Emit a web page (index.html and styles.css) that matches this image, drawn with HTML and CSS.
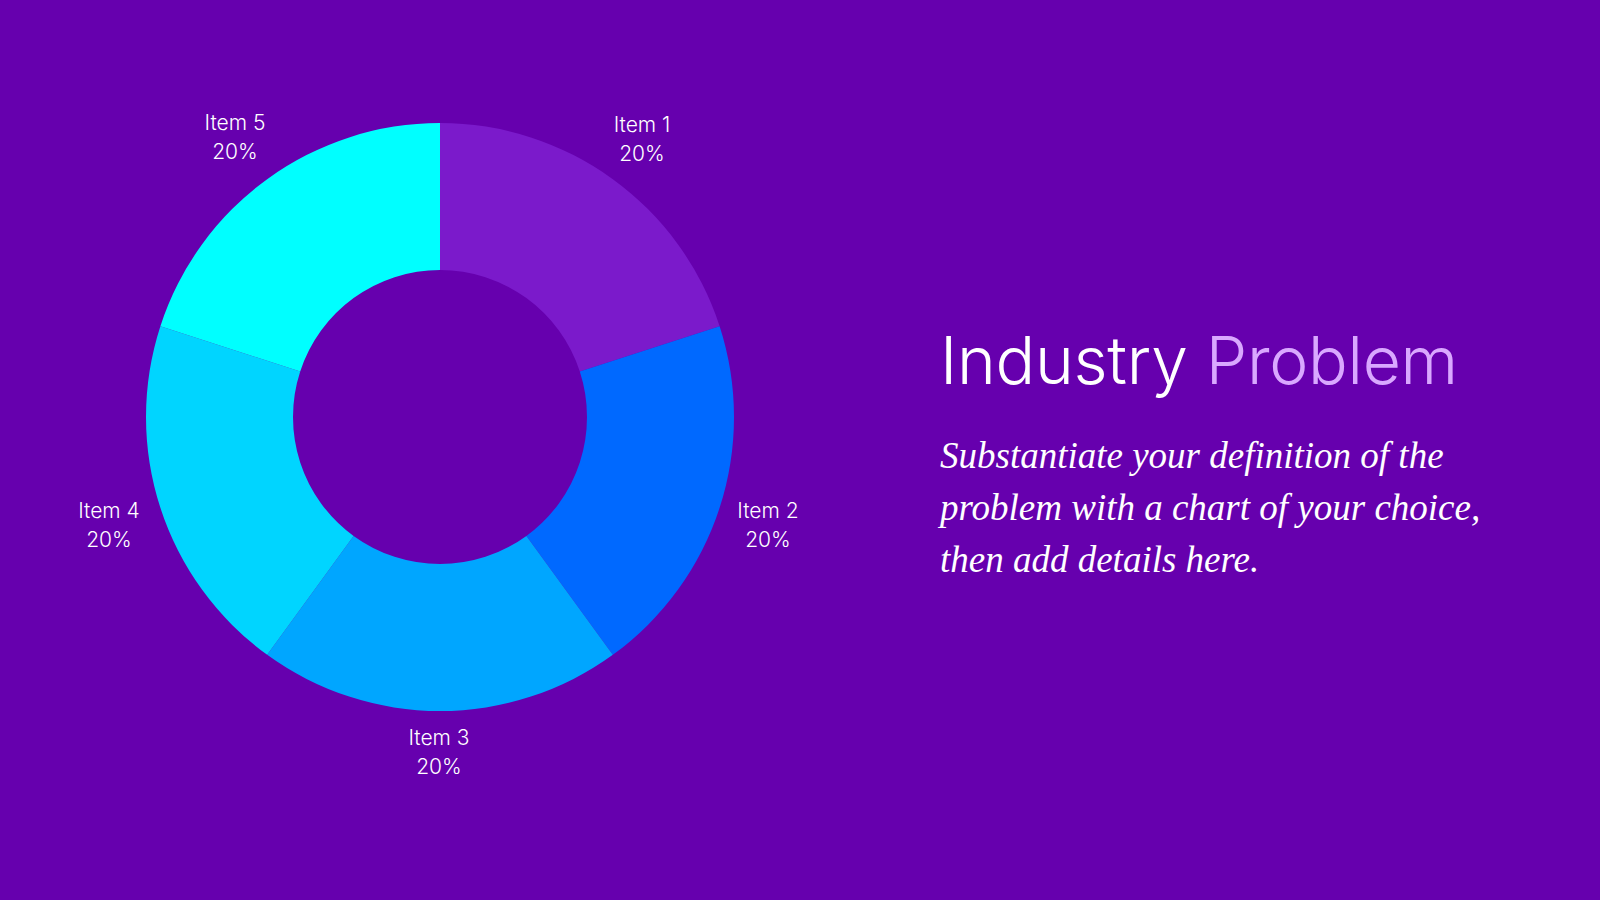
FILE: index.html
```html
<!DOCTYPE html>
<html lang="en">
<head>
<meta charset="utf-8">
<title>Industry Problem</title>
<link rel="stylesheet" href="styles.css">
</head>
<body>
<main class="slide">
  <section class="chart">
    <svg class="donut" viewBox="0 0 880 900" width="880" height="900">
      <path class="s1" d="M440 123 A294 294 0 0 1 719.61 326.15 L579.80 371.57 A147 147 0 0 0 440 270 Z"/>
      <path class="s2" d="M719.61 326.15 A294 294 0 0 1 612.81 654.85 L526.41 535.93 A147 147 0 0 0 579.80 371.57 Z"/>
      <path class="s3" d="M612.81 654.85 A294 294 0 0 1 267.19 654.85 L353.59 535.93 A147 147 0 0 0 526.41 535.93 Z"/>
      <path class="s4" d="M267.19 654.85 A294 294 0 0 1 160.39 326.15 L300.20 371.57 A147 147 0 0 0 353.59 535.93 Z"/>
      <path class="s5" d="M160.39 326.15 A294 294 0 0 1 440 123 L440 270 A147 147 0 0 0 300.20 371.57 Z"/>
      <g class="labels">
        <text x="642" y="132"><tspan x="642">Item 1</tspan><tspan x="642" dy="29">20%</tspan></text>
        <text x="768" y="518"><tspan x="768">Item 2</tspan><tspan x="768" dy="29">20%</tspan></text>
        <text x="439" y="745"><tspan x="439">Item 3</tspan><tspan x="439" dy="29">20%</tspan></text>
        <text x="109" y="518"><tspan x="109">Item 4</tspan><tspan x="109" dy="29">20%</tspan></text>
        <text x="235" y="130"><tspan x="235">Item 5</tspan><tspan x="235" dy="29">20%</tspan></text>
      </g>
    </svg>
  </section>
  <section class="copy">
    <h1 class="title">Industry <span class="accent">Problem</span></h1>
    <p class="lead">Substantiate your definition of the problem with a chart of your choice, then add details here.</p>
  </section>
</main>
</body>
</html>
```
FILE: styles.css
```css
html, body {
  margin: 0;
  padding: 0;
}
body {
  background: #6600ae;
  width: 1600px;
  height: 900px;
  overflow: hidden;
}
.slide {
  display: flex;
  width: 1600px;
  height: 900px;
}
.chart {
  flex: 0 0 880px;
}
.donut {
  display: block;
}
.s1 { fill: #7b1acb; }
.s2 { fill: #0069ff; }
.s3 { fill: #00a6ff; }
.s4 { fill: #00d5ff; }
.s5 { fill: #00ffff; }
.labels text {
  fill: #ffffff;
  font-family: Inter, "Noto Sans", sans-serif;
  font-size: 21px;
  font-weight: 300;
  text-anchor: middle;
}
.copy {
  padding: 320px 0 0 60px;
  color: #ffffff;
}
.title {
  margin: 0;
  font-family: Inter, "Noto Sans", sans-serif;
  font-weight: 300;
  font-size: 66px;
  line-height: 80px;
  letter-spacing: -0.3px;
  white-space: nowrap;
}
.accent {
  color: #d9a8ff;
}
.lead {
  margin: 30px 0 0 0;
  width: 560px;
  font-family: "Liberation Serif", serif;
  font-style: italic;
  font-size: 37px;
  line-height: 52px;
}
```
